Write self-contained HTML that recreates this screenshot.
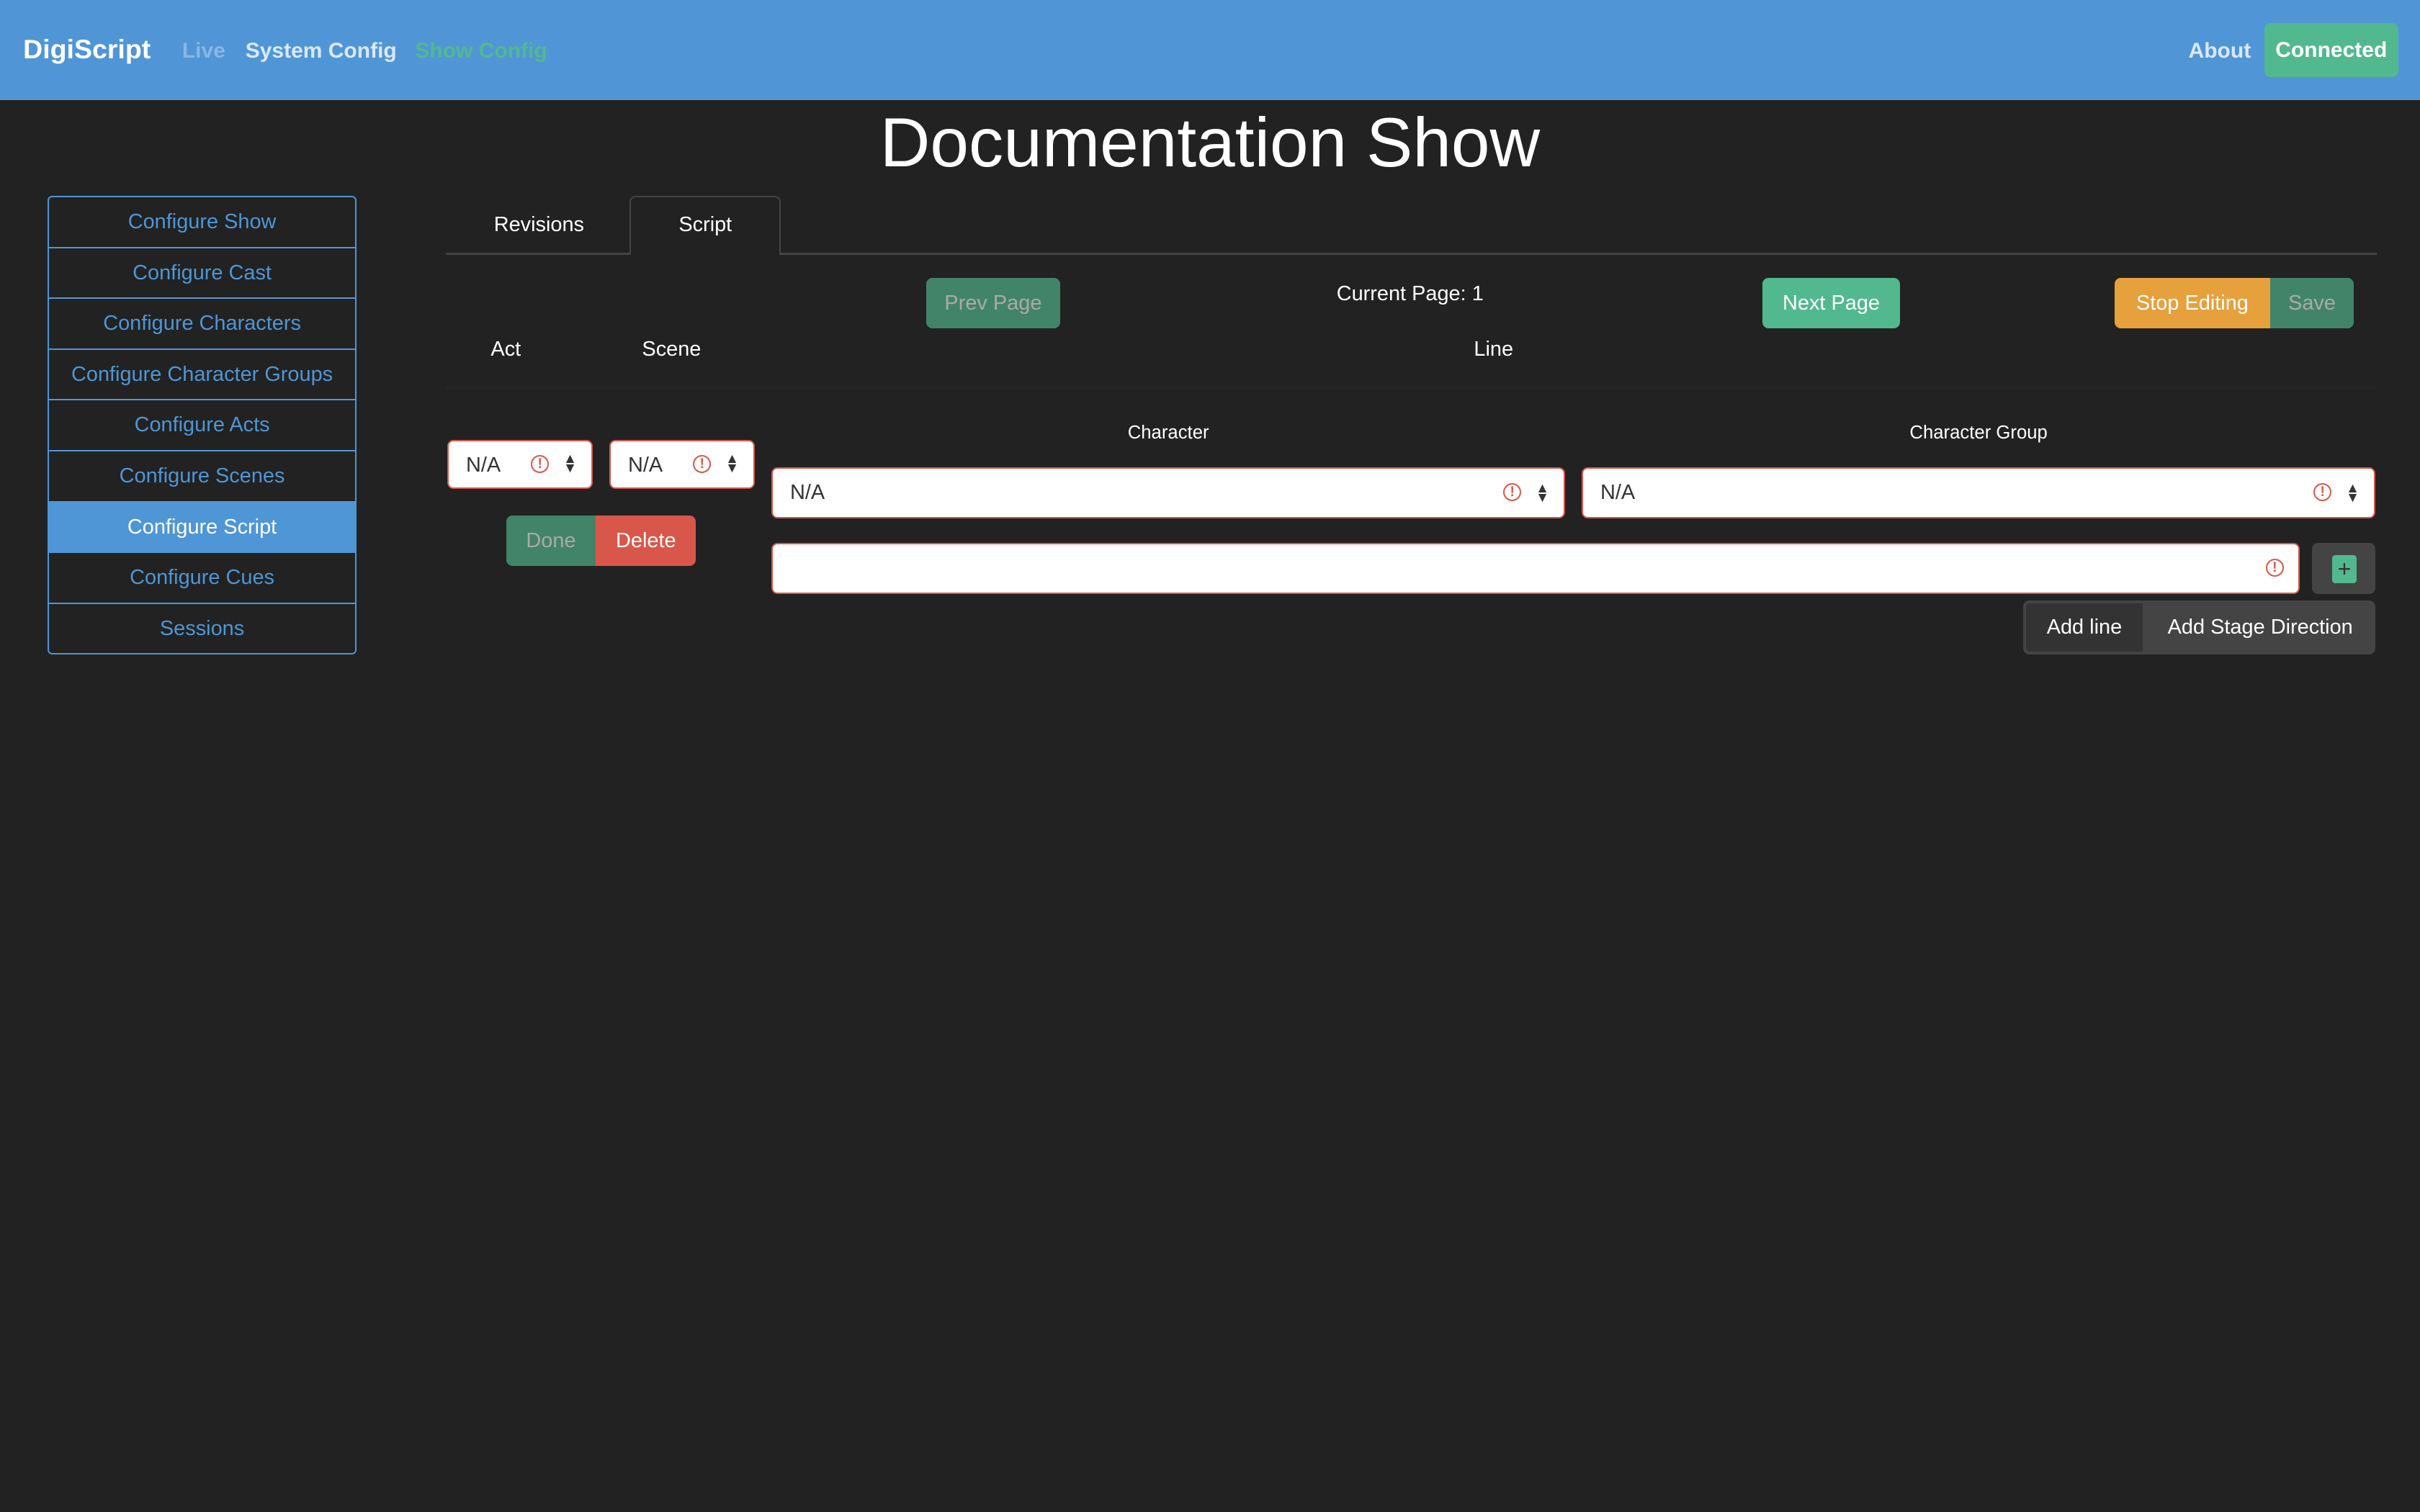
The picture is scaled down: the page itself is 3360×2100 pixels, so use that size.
<!DOCTYPE html>
<html><head><meta charset="utf-8"><style>
html,body{margin:0;padding:0;background:#222;overflow:hidden}
body{width:3360px;height:2100px}
#w{zoom:2.142857;width:1568px;height:980px;position:relative;font-family:"Liberation Sans",sans-serif;color:#fff}
.a{position:absolute}
.nav{left:0;top:0;width:1568px;height:65px;background:#5096d6}
.nt{top:25px;font-size:14px;font-weight:bold}
.side{left:31px;top:127px;width:198px;border:1px solid #4e96d6;border-radius:3px}
.side div{height:32px;line-height:32px;text-align:center;color:#4e96d6;font-size:13.5px;border-top:1px solid #4e96d6}
.side div:first-child{border-top:none}
.side .act{background:#4e96d6;color:#fff}
.btn{display:flex;align-items:center;justify-content:center;font-size:13.5px;border-radius:4px}
.sel{background:#fff;border:1px solid #d9574a;border-radius:4px;color:#333;font-size:13.5px;box-sizing:border-box}
.ex{position:absolute;width:10px;height:10px;border:1.3px solid #d9574a;border-radius:50%;color:#d9574a;font-size:9px;line-height:10px;text-align:center;font-weight:bold}
.ar{position:absolute;font-size:9px;line-height:6px;color:#333}
</style></head><body><div id="w">
<div class="a nav"></div>
<div class="a" style="left:15px;top:22px;font-size:17.5px;font-weight:bold">DigiScript</div>
<div class="a nt" style="left:118px;color:#8ab6e3">Live</div>
<div class="a nt" style="left:159px;color:#dbe8f6">System Config</div>
<div class="a nt" style="left:269px;color:#52b88f">Show Config</div>
<div class="a nt" style="left:1418px;color:#dbe8f6">About</div>
<div class="a btn" style="left:1467px;top:15px;width:87px;height:35px;background:#52b88f;font-weight:bold;font-size:14px">Connected</div>
<div class="a" style="left:0;width:1568px;top:67px;text-align:center;font-size:45px">Documentation Show</div>
<div class="a side">
<div>Configure Show</div><div>Configure Cast</div><div>Configure Characters</div><div>Configure Character Groups</div><div>Configure Acts</div><div>Configure Scenes</div><div class="act">Configure Script</div><div>Configure Cues</div><div>Sessions</div>
</div>
<div class="a" style="left:289px;top:164px;width:1251px;height:1px;background:#444"></div>
<div class="a" style="left:320px;top:138px;font-size:13.5px">Revisions</div>
<div class="a" style="left:408px;top:127px;width:98px;height:38px;border:1px solid #444;border-bottom:none;border-radius:4px 4px 0 0;background:#222;box-sizing:border-box;text-align:center;line-height:36px;font-size:13.5px">Script</div>
<div class="a btn" style="left:600px;top:180px;width:87px;height:33px;background:#42846a;color:#aaa">Prev Page</div>
<div class="a" style="left:866px;top:183px;font-size:13.5px">Current Page: 1</div>
<div class="a btn" style="left:1142px;top:180px;width:89px;height:33px;background:#52b88f">Next Page</div>
<div class="a btn" style="left:1370px;top:180px;width:101px;height:33px;background:#e6a03c;border-radius:4px 0 0 4px">Stop Editing</div>
<div class="a btn" style="left:1471px;top:180px;width:54px;height:33px;background:#42846a;color:#aaa;border-radius:0 4px 4px 0">Save</div>
<div class="a" style="left:318px;top:219px;font-size:13.5px">Act</div>
<div class="a" style="left:416px;top:219px;font-size:13.5px">Scene</div>
<div class="a" style="left:955px;top:219px;font-size:13.5px">Line</div>
<div class="a" style="left:289px;top:250px;width:1251px;height:2px;background:#262626"></div>
<div class="a" style="left:700px;width:114px;text-align:center;top:274px;font-size:12px">Character</div>
<div class="a" style="left:1200px;width:164px;text-align:center;top:274px;font-size:12px">Character Group</div>

<div class="a sel" style="left:290px;top:285px;width:94px;height:32px"><span class="a" style="left:11px;top:8px">N/A</span><span class="ex" style="left:53px;top:9px">!</span><span class="ar" style="left:74px;top:9px">▲<br>▼</span></div>
<div class="a sel" style="left:395px;top:285px;width:94px;height:32px"><span class="a" style="left:11px;top:8px">N/A</span><span class="ex" style="left:53px;top:9px">!</span><span class="ar" style="left:74px;top:9px">▲<br>▼</span></div>
<div class="a btn" style="left:328px;top:334px;width:58px;height:33px;background:#42846a;color:#aaa;border-radius:4px 0 0 4px">Done</div>
<div class="a btn" style="left:386px;top:334px;width:65px;height:33px;background:#d9574a;border-radius:0 4px 4px 0">Delete</div>

<div class="a sel" style="left:500px;top:303px;width:514px;height:33px"><span class="a" style="left:11px;top:8px">N/A</span><span class="ex" style="left:473px;top:9px">!</span><span class="ar" style="left:494px;top:10px">▲<br>▼</span></div>
<div class="a sel" style="left:1025px;top:303px;width:514px;height:33px"><span class="a" style="left:11px;top:8px">N/A</span><span class="ex" style="left:473px;top:9px">!</span><span class="ar" style="left:494px;top:10px">▲<br>▼</span></div>
<div class="a sel" style="left:500px;top:352px;width:990px;height:33px"><span class="ex" style="left:967px;top:9px">!</span></div>
<div class="a" style="left:1498px;top:352px;width:41px;height:33px;background:#444;border-radius:4px"><div class="a btn" style="left:13px;top:8px;width:16px;height:18px;background:#52b88f;color:#333;font-size:15px;border-radius:2px">+</div></div>
<div class="a btn" style="left:1311px;top:389px;width:79px;height:35px;background:#333;border:2px solid #444;box-sizing:border-box;border-radius:4px 0 0 4px">Add line</div>
<div class="a btn" style="left:1390px;top:389px;width:149px;height:35px;background:#444;border-radius:0 4px 4px 0">Add Stage Direction</div>
</div></body></html>
